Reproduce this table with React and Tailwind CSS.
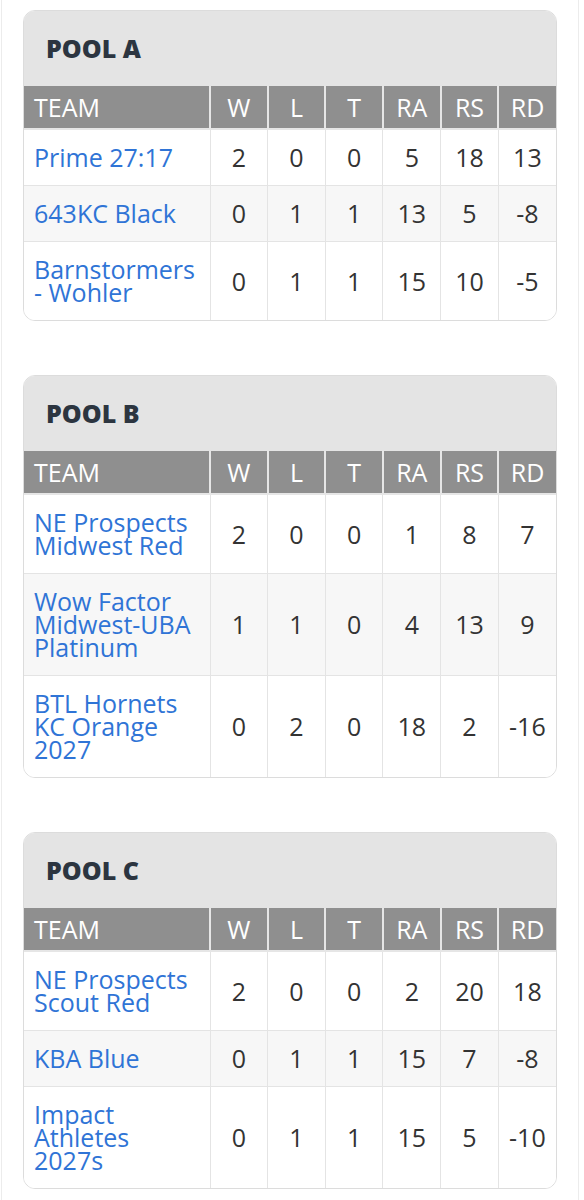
const pools = [
  {
    name: 'POOL A',
    rows: [
      ['Prime 27:17', 2, 0, 0, 5, 18, 13],
      ['643KC Black', 0, 1, 1, 13, 5, -8],
      ['Barnstormers - Wohler', 0, 1, 1, 15, 10, -5],
    ],
  },
  {
    name: 'POOL B',
    rows: [
      ['NE Prospects Midwest Red', 2, 0, 0, 1, 8, 7],
      ['Wow Factor Midwest-UBA Platinum', 1, 1, 0, 4, 13, 9],
      ['BTL Hornets KC Orange 2027', 0, 2, 0, 18, 2, -16],
    ],
  },
  {
    name: 'POOL C',
    rows: [
      ['NE Prospects Scout Red', 2, 0, 0, 2, 20, 18],
      ['KBA Blue', 0, 1, 1, 15, 7, -8],
      ['Impact Athletes 2027s', 0, 1, 1, 15, 5, -10],
    ],
  },
];

const heads = ['W', 'L', 'T', 'RA', 'RS', 'RD'];

const PoolCard = ({ pool }) => (
  <div className="rounded-xl border border-[#dcdcdc] overflow-hidden bg-white">
    {/* Pool title band */}
    <div className="h-[75px] bg-[#e4e4e4] flex items-center px-[22px]">
      <h2 className="text-[25px] font-extrabold text-[#2c3540] leading-none">{pool.name}</h2>
    </div>

    <table className="w-full table-fixed border-collapse">
      <colgroup>
        <col className="w-[186px]" />
        {heads.map((h) => (
          <col key={h} />
        ))}
      </colgroup>
      <thead>
        <tr className="bg-[#8f8f8f] text-white border-b-2 border-[#e6e6e6]">
          <th className="text-left font-normal pl-[10px] py-[9px] leading-[24px] border-r-2 border-[#e6e6e6]">TEAM</th>
          {heads.map((h, i) => (
            <th
              key={h}
              className={`font-normal text-center py-[9px] leading-[24px] ${i < heads.length - 1 ? 'border-r-2 border-[#e6e6e6]' : ''}`}
            >
              {h}
            </th>
          ))}
        </tr>
      </thead>
      <tbody>
        {pool.rows.map((r, ri) => (
          <tr key={ri} className={`${ri % 2 === 1 ? 'bg-[#f7f7f7]' : 'bg-white'} ${ri < pool.rows.length - 1 ? 'border-b border-[#e4e4e4]' : ''}`}>
            <td className="pl-[10px] pr-2 py-4 leading-[23px] text-[#2f74d6] border-r border-[#e4e4e4]">
              <a href="#">{r[0]}</a>
            </td>
            {r.slice(1).map((v, i) => (
              <td
                key={i}
                className={`text-center text-[#333] py-4 leading-[23px] ${i < 5 ? 'border-r border-[#e4e4e4]' : ''}`}
              >
                {v}
              </td>
            ))}
          </tr>
        ))}
      </tbody>
    </table>
  </div>
);

export default function App() {
  return (
    <div className="bg-white min-h-[1200px] font-['Open_Sans',sans-serif] text-[25px]">
      <div className="ml-px w-[578px] min-h-[1200px] border-x border-[#ececec] px-[21px] pt-[10px] flex flex-col gap-[54px]">
        {pools.map((p) => (
          <PoolCard key={p.name} pool={p} />
        ))}
      </div>
    </div>
  );
}
